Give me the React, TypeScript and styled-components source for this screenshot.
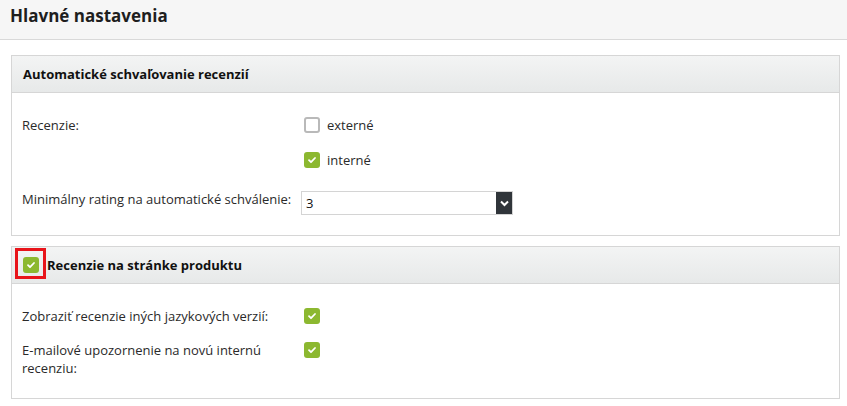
import React from "react";
import styled, { createGlobalStyle } from "styled-components";

const Global = createGlobalStyle`
  html, body { margin: 0; padding: 0; background: #fff; }
  body {
    font-family: "Open Sans", "Noto Sans", Arial, sans-serif;
    font-size: 13px;
    line-height: 18px;
    color: #222;
  }
`;

const TopBar = styled.header`
  box-sizing: border-box;
  height: 40px;
  background: #f6f6f6;
  border-bottom: 1px solid #d9d9d9;
  padding: 4px 0 0 10px;
`;

const Title = styled.h1`
  margin: 0;
  font-size: 17px;
  line-height: 24px;
  font-weight: 700;
  color: #1e1e1e;
`;

const Content = styled.main`
  padding: 15px 7px 0 11px;
  display: flex;
  flex-direction: column;
  gap: 10px;
`;

const Panel = styled.section`
  border: 1px solid #d6d6d6;
  background: #fff;
`;

const PanelHeader = styled.div`
  position: relative;
  height: 36px;
  display: flex;
  align-items: center;
  gap: 8px;
  padding-left: 11px;
  background: linear-gradient(#f3f4f4, #e7e9e9);
  border-bottom: 1px solid #d6d6d6;
`;

const PanelTitle = styled.h2`
  margin: 0;
  font-size: 13px;
  font-weight: 700;
  color: #111;
`;

const PanelBody = styled.div<{ $bottom: number }>`
  padding: 23px 10px ${(p) => p.$bottom}px 10px;
  display: grid;
  grid-template-columns: 279px 1fr;
  row-gap: 16px;
  align-items: start;
`;

const Label = styled.div`
  color: #2a2a2a;
  max-width: 270px;
`;

const SelectLabel = styled(Label)`
  margin-top: 5px;
`;

const Options = styled.div`
  display: flex;
  flex-direction: column;
  gap: 17px;
`;

const OptionRow = styled.label`
  display: flex;
  align-items: center;
  gap: 7px;
  height: 18px;
  padding-left: 3px;
  color: #2a2a2a;
`;

const Box = styled.span<{ $checked: boolean }>`
  width: 16px;
  height: 16px;
  box-sizing: border-box;
  border-radius: 3px;
  display: inline-flex;
  align-items: center;
  justify-content: center;
  flex: none;
  background: ${(p) => (p.$checked ? "#8cb830" : "#fff")};
  border: ${(p) => (p.$checked ? "none" : "2px solid #b9b9b9")};
`;

const Highlight = styled.span`
  position: absolute;
  left: 3px;
  top: 1px;
  width: 31px;
  height: 31px;
  box-sizing: border-box;
  border: 3px solid #e8141a;
  pointer-events: none;
`;

const SelectBox = styled.div`
  width: 212px;
  height: 24px;
  box-sizing: border-box;
  border: 1px solid #d4d4d4;
  display: flex;
  align-items: stretch;
  margin-top: 6px;
`;

const SelectValue = styled.span`
  flex: 1;
  padding-left: 4px;
  line-height: 23px;
  color: #111;
`;

const SelectArrow = styled.span`
  width: 16px;
  background: #30353a;
  display: flex;
  align-items: center;
  justify-content: center;
`;

const CheckCell = styled.div`
  padding-left: 3px;
  height: 18px;
  display: flex;
  align-items: center;
`;

const Check = () => (
  <svg width="10" height="10" viewBox="0 0 10 10">
    <path d="M2 5.2l2 2L8 3" fill="none" stroke="#fff" strokeWidth="1.8" strokeLinecap="round" strokeLinejoin="round" />
  </svg>
);

const Checkbox = ({ checked }: { checked: boolean }) => (
  <Box $checked={checked}>{checked && <Check />}</Box>
);

export default function App() {
  return (
    <>
      <Global />
      <TopBar>
        <Title>Hlavné nastavenia</Title>
      </TopBar>
      <Content>
        <Panel>
          <PanelHeader>
            <PanelTitle>Automatické schvaľovanie recenzií</PanelTitle>
          </PanelHeader>
          <PanelBody $bottom={20}>
            <Label>Recenzie:</Label>
            <Options>
              <OptionRow>
                <Checkbox checked={false} />
                externé
              </OptionRow>
              <OptionRow>
                <Checkbox checked />
                interné
              </OptionRow>
            </Options>
            <SelectLabel>Minimálny rating na automatické schválenie:</SelectLabel>
            <SelectBox>
              <SelectValue>3</SelectValue>
              <SelectArrow>
                <svg width="9" height="7" viewBox="0 0 9 7">
                  <path d="M1 1.5l3.5 3.5L8 1.5" fill="none" stroke="#fff" strokeWidth="2" />
                </svg>
              </SelectArrow>
            </SelectBox>
          </PanelBody>
        </Panel>
        <Panel>
          <PanelHeader>
            <Checkbox checked />
            <PanelTitle>Recenzie na stránke produktu</PanelTitle>
            <Highlight />
          </PanelHeader>
          <PanelBody $bottom={21}>
            <Label>Zobraziť recenzie iných jazykových verzií:</Label>
            <CheckCell>
              <Checkbox checked />
            </CheckCell>
            <Label>E-mailové upozornenie na novú internú recenziu:</Label>
            <CheckCell>
              <Checkbox checked />
            </CheckCell>
          </PanelBody>
        </Panel>
      </Content>
    </>
  );
}
